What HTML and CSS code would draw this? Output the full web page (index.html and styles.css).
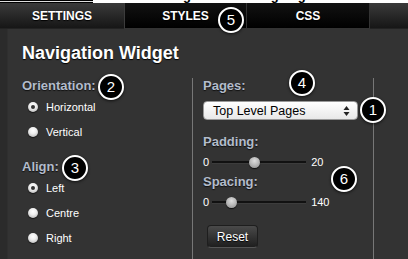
FILE: index.html
```html
<!DOCTYPE html>
<html>

<head>
    <meta charset="UTF-8">
    <link rel="stylesheet" href="styles.css">
    <title>Navigation Widget</title>
</head>

<body>
    <div class="page">
        <div class="strip">
            <div class="strip-left"></div>
            <div class="strip-white"><span>with linking Tab and highlights hidden on the widget page</span></div>
        </div>

        <div class="tabs">
            <div class="tab tab-light">SETTINGS</div>
            <div class="tab tab-dark">STYLES</div>
            <div class="tab tab-dark">CSS</div>
            <div class="tab tab-light tab-rest"></div>
        </div>

        <div class="panel">
            <h1>Navigation Widget</h1>
            <div class="columns">
                <div class="col-left">
                    <div class="label">Orientation:</div>
                    <div class="radio-row"><span class="radio checked"></span>Horizontal</div>
                    <div class="radio-row"><span class="radio"></span>Vertical</div>

                    <div class="label label-gap">Align:</div>
                    <div class="radio-row"><span class="radio checked"></span>Left</div>
                    <div class="radio-row"><span class="radio"></span>Centre</div>
                    <div class="radio-row"><span class="radio"></span>Right</div>
                </div>

                <div class="col-right">
                    <div class="label">Pages:</div>
                    <div class="select">
                        <span>Top Level Pages</span>
                        <svg class="select-arrows" width="7" height="12" viewBox="0 0 7 12">
                            <path d="M3.5 1 L6.5 5 L0.5 5 Z" fill="#222" />
                            <path d="M3.5 11 L6.5 7 L0.5 7 Z" fill="#222" />
                        </svg>
                    </div>

                    <div class="label label-gap">Padding:</div>
                    <div class="slider-row">
                        <span class="slider-min">0</span>
                        <div class="track"><span class="thumb" style="left: 37px;"></span></div>
                        <span class="slider-max">20</span>
                    </div>

                    <div class="label">Spacing:</div>
                    <div class="slider-row">
                        <span class="slider-min">0</span>
                        <div class="track"><span class="thumb" style="left: 14px;"></span></div>
                        <span class="slider-max">140</span>
                    </div>

                    <button class="reset">Reset</button>
                </div>

                <div class="col-end"></div>
            </div>
        </div>

        <!-- callout numbers over the screenshot -->
        <div class="badge badge-5">5</div>
        <div class="badge badge-2">2</div>
        <div class="badge badge-3">3</div>
        <div class="badge badge-4">4</div>
        <div class="badge badge-1">1</div>
        <div class="badge badge-6">6</div>
    </div>
</body>

</html>
```

FILE: styles.css
```css
* {
    box-sizing: border-box;
}

body {
    margin: 0;
    background: #333;
    font-family: "Liberation Sans", Arial, sans-serif;
}

.page {
    position: relative;
    width: 408px;
    height: 259px;
    overflow: hidden;
    background: #333;
}

/* bit of the page above the widget */
.strip {
    display: flex;
    height: 3px;
    background: #000;
}

.strip-left {
    width: 128px;
    border-top: 1px solid #000;
    border-bottom: 1px solid #ddd;
    height: 2px;
}

.strip-white {
    flex-grow: 1;
    background: #fff;
    overflow: hidden;
    padding-left: 16px;
}

.strip-white span {
    display: block;
    margin-top: -12px;
    font-size: 13px;
    font-weight: bold;
    color: #000;
    white-space: nowrap;
    letter-spacing: 1px;
}

.tabs {
    display: flex;
    height: 26px;
}

.tab {
    flex: 0 0 123px;
    display: flex;
    align-items: center;
    justify-content: center;
    color: #fff;
    font-size: 12px;
    font-weight: bold;
    text-shadow: 0 1px 1px #000;
}

.tab-light {
    flex-basis: 124px;
    background: linear-gradient(#3a3a3a, #161616);
    border-bottom: 1px solid #222;
}

.tab-dark {
    background: linear-gradient(#121212, #000);
    border: 1px solid #333;
    border-left-color: #3c3c3c;
    border-top: none;
}

.tab-dark + .tab-dark {
    border-left: none;
}

.tab-rest {
    flex: 1 1 0;
}

.panel {
    background: linear-gradient(to right, #2b2b2b 0, #2b2b2b 7px, #333 8px);
    padding: 13px 0 0 22px;
    height: 230px;
}

h1 {
    margin: 0;
    font-size: 18px;
    line-height: 22px;
    color: #fff;
    text-shadow: 0 1px 1px #000;
}

.columns {
    display: flex;
    margin-top: 14px;
    height: 181px;
}

.col-left {
    width: 170px;
}

.col-right {
    width: 181px;
    border-left: 1px solid #777;
    padding-left: 10px;
}

.col-end {
    border-left: 1px solid #777;
}

.label {
    font-size: 13px;
    line-height: 16px;
    font-weight: bold;
    color: #b3bccb;
    text-shadow: 0 1px 1px #111;
}

.col-left .label-gap {
    margin-top: 15px;
}

.col-right .label-gap {
    margin-top: 14px;
}

.radio-row {
    display: flex;
    align-items: center;
    height: 25px;
    padding-left: 6px;
    font-size: 11px;
    color: #fff;
}

.radio {
    width: 10px;
    height: 10px;
    margin-right: 8px;
    border-radius: 50%;
    background: radial-gradient(circle at 50% 35%, #fff 0, #eee 40%, #aaa 100%);
    box-shadow: 0 1px 1px rgba(0, 0, 0, 0.6);
    display: flex;
    align-items: center;
    justify-content: center;
}

.radio.checked::after {
    content: "";
    width: 4px;
    height: 4px;
    border-radius: 50%;
    background: #333;
}

.select {
    display: flex;
    align-items: center;
    justify-content: space-between;
    width: 155px;
    height: 19px;
    margin-top: 7px;
    padding: 0 7px 0 9px;
    border: 1px solid #999;
    border-radius: 4px;
    background: linear-gradient(#fff, #e8e8e8);
    font-size: 12.5px;
    color: #000;
}

.slider-row {
    display: flex;
    align-items: center;
    height: 24px;
    font-size: 11px;
    color: #fff;
}

.track {
    position: relative;
    width: 94px;
    height: 3px;
    margin: 0 5px 0 3px;
    background: #111;
    border-bottom: 1px solid #3c3c3c;
}

.thumb {
    position: absolute;
    top: -4px;
    width: 11px;
    height: 11px;
    border-radius: 50%;
    background: radial-gradient(circle at 50% 35%, #ddd 0, #bbb 45%, #888 100%);
    box-shadow: 0 1px 1px rgba(0, 0, 0, 0.7);
}

.reset {
    display: block;
    width: 51px;
    height: 23px;
    margin: 11px 0 0 4px;
    padding: 0;
    border: 1px solid #1e1e1e;
    border-bottom-color: #555;
    border-radius: 4px;
    background: linear-gradient(#4a4a4a, #1e1e1e);
    color: #fff;
    font-family: "Liberation Sans", Arial, sans-serif;
    font-size: 12px;
    text-shadow: 0 1px 1px #000;
}

.badge {
    position: absolute;
    width: 26px;
    height: 26px;
    border: 2px solid #fff;
    border-radius: 50%;
    background: #000;
    color: #fff;
    font-size: 15px;
    line-height: 22px;
    text-align: center;
    box-shadow: 0 1px 3px rgba(0, 0, 0, 0.7);
}

.badge-5 { left: 218px; top: 7px; }
.badge-2 { left: 98px; top: 74px; }
.badge-3 { left: 62px; top: 155px; }
.badge-4 { left: 289px; top: 70px; }
.badge-1 { left: 360px; top: 97px; }
.badge-6 { left: 331px; top: 166px; }
```
